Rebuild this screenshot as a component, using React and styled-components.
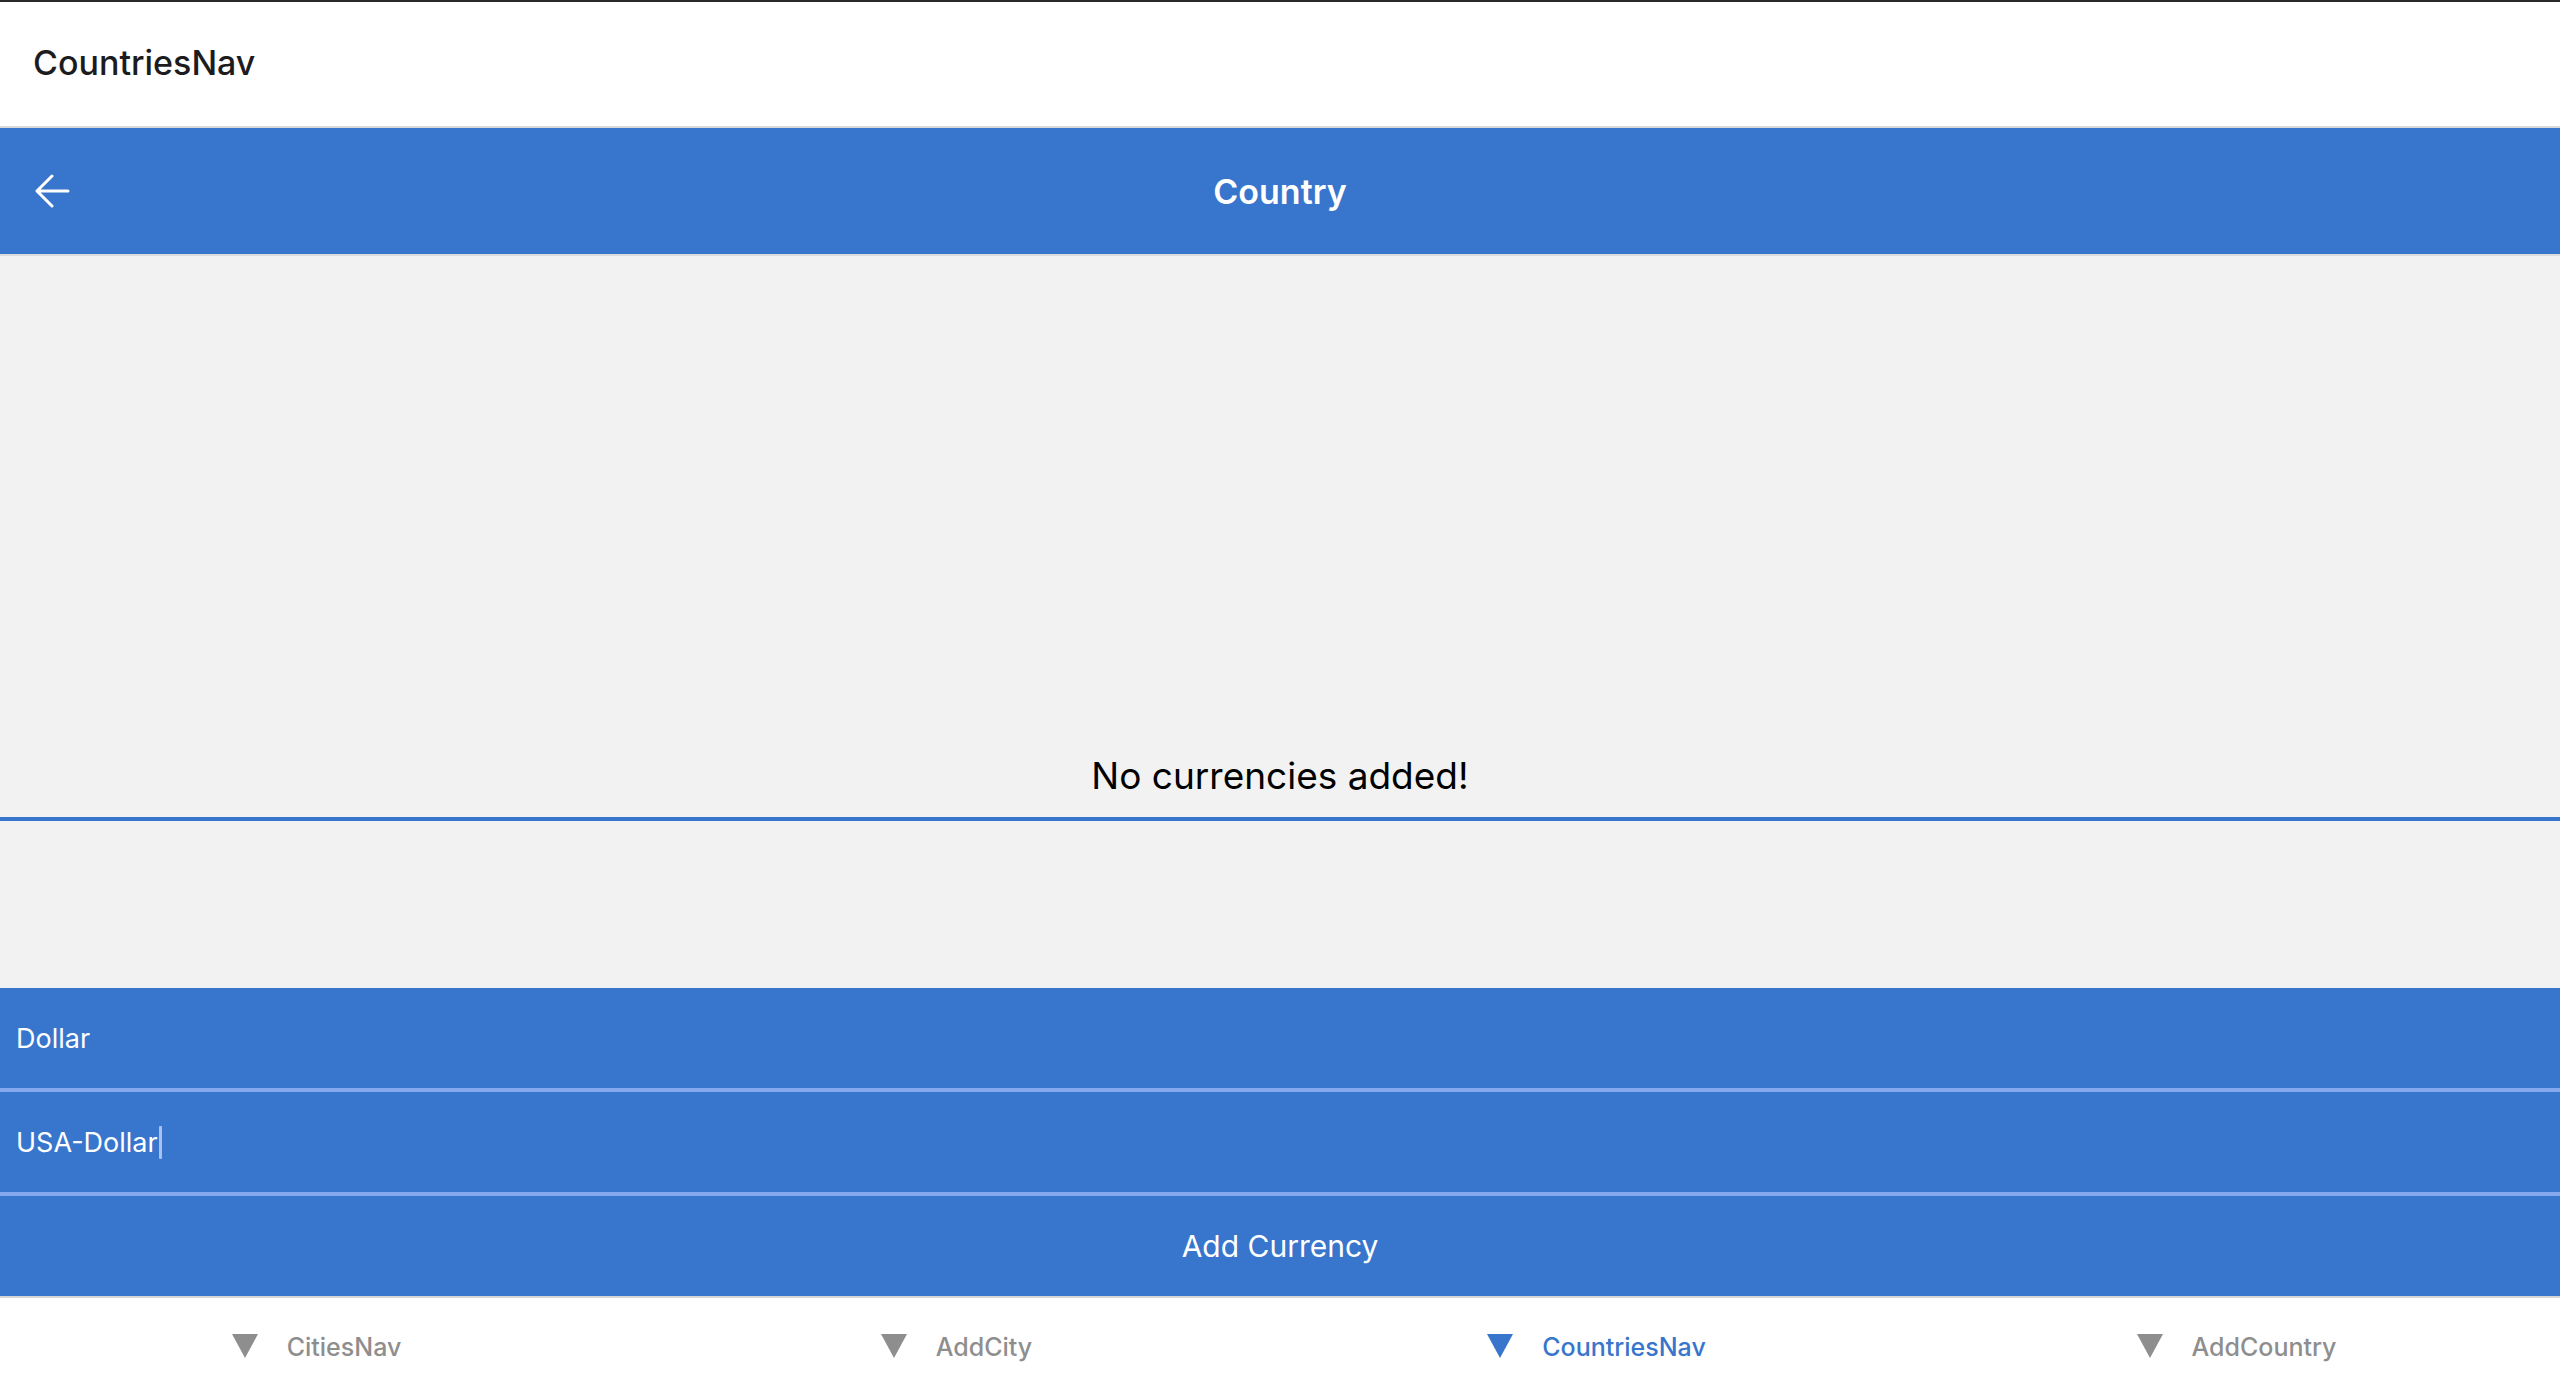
import React from "react";
import styled, { createGlobalStyle } from "styled-components";

const Global = createGlobalStyle`
  html, body { margin: 0; padding: 0; }
  body { font-family: Inter, "Noto Sans", sans-serif; background: #ffffff; }
  * { box-sizing: border-box; }
`;

const BLUE = "#3875cc";

const Screen = styled.div`
  height: 1394px;
  display: flex;
  flex-direction: column;
  border-top: 2px solid #2a2a2a;
  overflow: hidden;
`;

const TopBar = styled.header`
  height: 126px;
  flex: none;
  display: flex;
  align-items: center;
  padding: 0 0 4px 33px;
  background: #ffffff;
  border-bottom: 2px solid #d9d9d9;
`;

const TopTitle = styled.h1`
  margin: 0;
  font-size: 34px;
  font-weight: 500;
  color: #1c1c1e;
  letter-spacing: 0;
`;

const NavBar = styled.div`
  height: 128px;
  flex: none;
  display: grid;
  grid-template-columns: 200px 1fr 200px;
  align-items: center;
  background: ${BLUE};
  border-bottom: 2px solid #dcdcdc;
`;

const BackButton = styled.button`
  justify-self: start;
  margin-left: 34px;
  padding: 0;
  border: none;
  background: transparent;
  display: flex;
  align-items: center;
  cursor: pointer;
`;

const NavTitle = styled.div`
  text-align: center;
  color: #ffffff;
  font-size: 34px;
  font-weight: 600;
`;

const Body = styled.main`
  flex: 1;
  display: flex;
  flex-direction: column;
  background: #f2f2f2;
`;

const MessageArea = styled.div`
  height: 561px;
  display: flex;
  align-items: flex-end;
  justify-content: center;
  padding-bottom: 19px;
`;

const Message = styled.p`
  margin: 0;
  font-size: 37px;
  line-height: 44px;
  color: #000000;
  font-weight: 400;
`;

const Divider = styled.div`
  height: 4px;
  background: ${BLUE};
`;

const Spacer = styled.div`
  height: 167px;
`;

const Field = styled.div`
  height: 104px;
  display: flex;
  align-items: center;
  padding-left: 16px;
  background: ${BLUE};
  color: #ffffff;
  font-size: 27px;
  border-bottom: 4px solid #86a8ec;
`;

const Caret = styled.span`
  display: inline-block;
  width: 3px;
  height: 33px;
  margin-left: 1px;
  background: #a9c1f0;
  border-radius: 1px;
`;

const AddButton = styled.button`
  height: 100px;
  border: none;
  background: ${BLUE};
  color: #ffffff;
  font-family: Inter, "Noto Sans", sans-serif;
  font-size: 30px;
  font-weight: 400;
  cursor: pointer;
`;

const TabBar = styled.nav`
  height: 98px;
  flex: none;
  display: grid;
  grid-template-columns: repeat(4, 1fr);
  background: #ffffff;
  border-top: 2px solid #d6d6d6;
`;

const Tab = styled.div`
  display: flex;
  align-items: center;
  justify-content: center;
  gap: 29px;
  padding-right: 7px;
  color: ${(p) => (p.$active ? BLUE : "#8e8e8e")};
`;

const TabLabel = styled.span`
  font-size: 25px;
  font-weight: 500;
  line-height: 30px;
  padding-top: 2px;
`;

const Tri = () => (
  <svg width="26" height="24" viewBox="0 0 26 24">
    <path d="M0 0 H26 L13 24 Z" fill="currentColor" />
  </svg>
);

const tabs = [
  { label: "CitiesNav" },
  { label: "AddCity" },
  { label: "CountriesNav", active: true },
  { label: "AddCountry" },
];

export default function App() {
  return (
    <>
      <Global />
      <Screen>
        <TopBar>
          <TopTitle>CountriesNav</TopTitle>
        </TopBar>
        <NavBar>
          <BackButton aria-label="Back">
            <svg width="36" height="34" viewBox="0 0 36 34">
              <path
                d="M18 2 L3 17 L18 32 M3 17 H34"
                fill="none"
                stroke="#ffffff"
                strokeWidth="3"
                strokeLinecap="round"
                strokeLinejoin="round"
              />
            </svg>
          </BackButton>
          <NavTitle>Country</NavTitle>
          <div />
        </NavBar>
        <Body>
          <MessageArea>
            <Message>No currencies added!</Message>
          </MessageArea>
          <Divider />
          <Spacer />
          <Field>Dollar</Field>
          <Field>
            USA-Dollar
            <Caret />
          </Field>
          <AddButton>Add Currency</AddButton>
        </Body>
        <TabBar>
          {tabs.map((t) => (
            <Tab key={t.label} $active={t.active}>
              <Tri />
              <TabLabel>{t.label}</TabLabel>
            </Tab>
          ))}
        </TabBar>
      </Screen>
    </>
  );
}
